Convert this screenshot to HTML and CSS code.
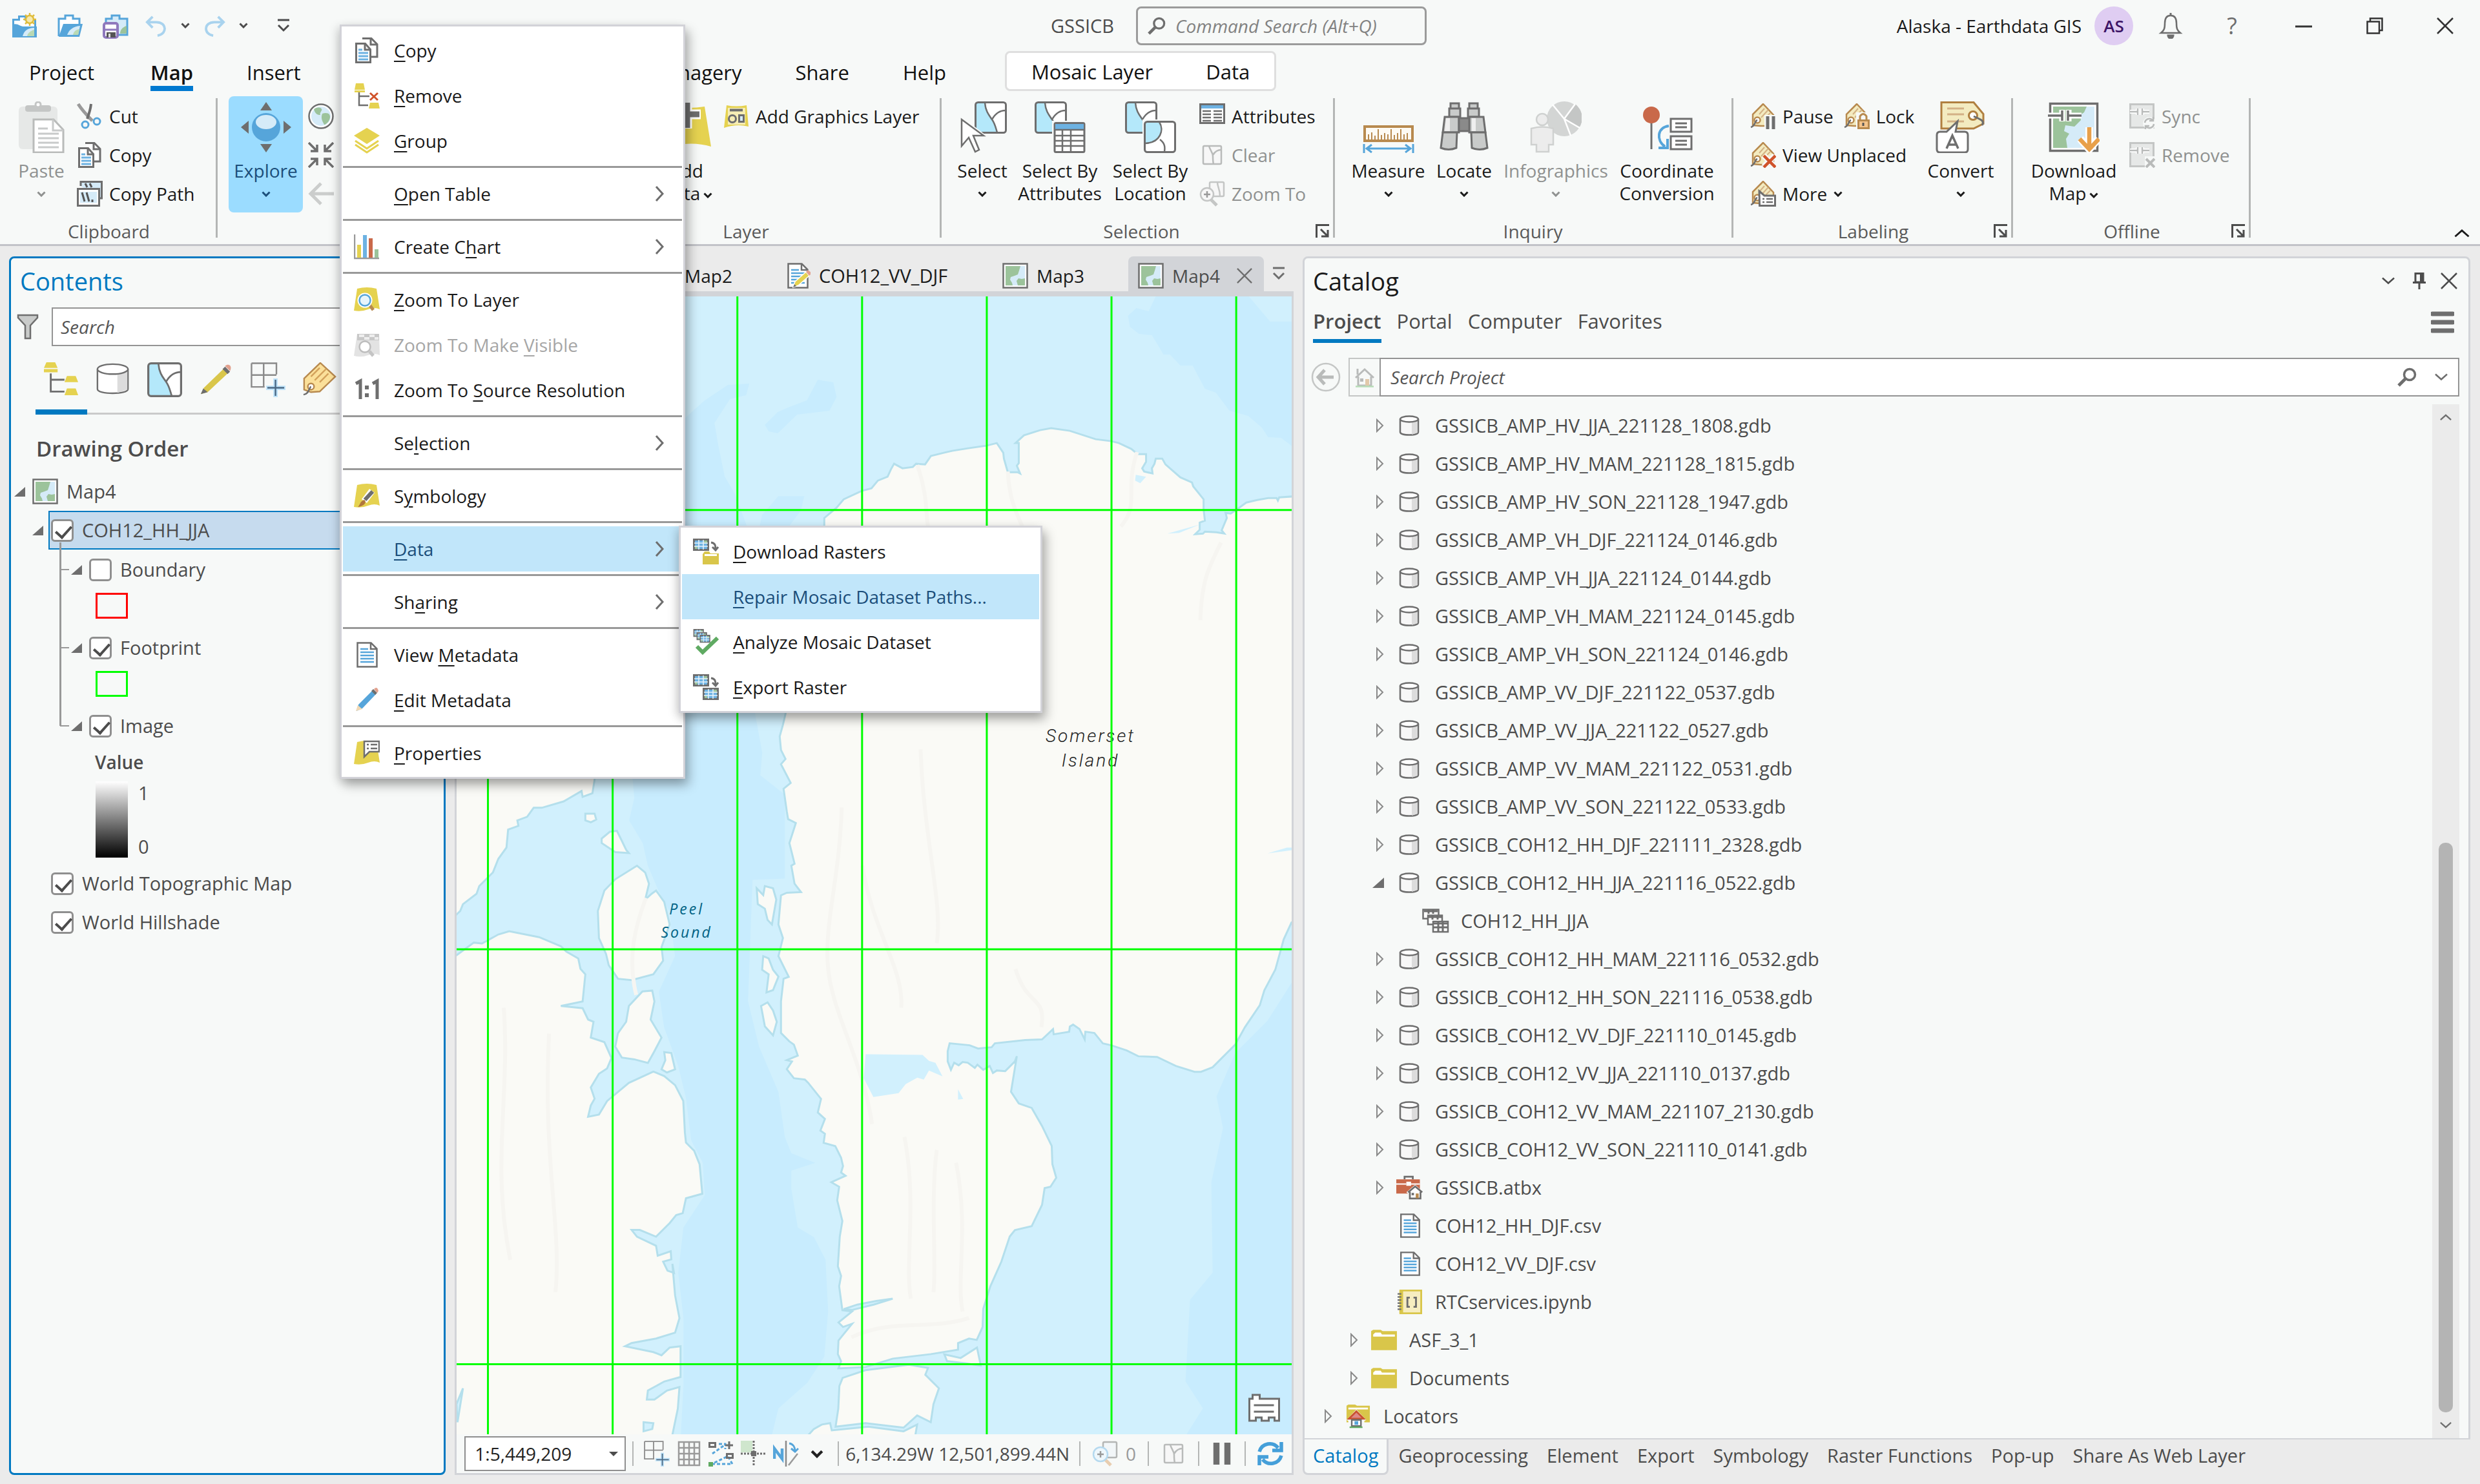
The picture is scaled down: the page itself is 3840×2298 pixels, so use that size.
FILE: index.html
```html
<!DOCTYPE html>
<html lang="en">
<head>
<meta charset="utf-8">
<meta name="viewport" content="width=device-width, initial-scale=1">
<title>GSSICB</title>
<link rel="stylesheet" href="styles.css">
</head>
<body>
<svg class="defs" aria-hidden="true">
  <symbol id="i-chev" viewBox="0 0 14 9"><path d="M1.500 1.500L7 7l5.500-5.500" fill="none" stroke="currentColor" stroke-width="3"/></symbol>
  <symbol id="i-chevthin" viewBox="0 0 20 12"><path d="M1 1.500l9 8 9-8" fill="none" stroke="currentColor" stroke-width="2.500"/></symbol>
  <symbol id="i-right" viewBox="0 0 14 26"><path d="M2 2l10 11L2 24" fill="none" stroke="#6e6e6e" stroke-width="3"/></symbol>
  <symbol id="i-launch" viewBox="0 0 21 21"><path d="M1.500 21V1.500H21M8 8l10 10M19 9v10H9" fill="none" stroke="#4c4c4c" stroke-width="3"/></symbol>
  <symbol id="i-mag" viewBox="0 0 30 30"><circle cx="19" cy="11" r="8.500" fill="none" stroke="#6e6e6e" stroke-width="3.500"/><path d="M13 17L2 28" stroke="#6e6e6e" stroke-width="5"/></symbol>
  <symbol id="i-new" viewBox="0 0 40 40"><path d="M1.500 36.500v-26h9v-5h10v5h15v26z" fill="#fff" stroke="#56a5da" stroke-width="3"/><path d="M0 38V18c8-3 12 3 18 3h20v17z" fill="#56a5da"/><path d="M16 36c2-8 8-13 18-13v13z" fill="#d5ebf8"/><path d="M23 36c1-5 5-8 11-10v10z" fill="#b9d9b4"/><circle cx="27" cy="10" r="6" fill="#f6e9ae" stroke="#e0bd3c" stroke-width="2.500"/><path d="M27 0v4M27 16v4M17 10h4M33 10h4M20 3l3 3M31 14l3 3M34 3l-3 3M23 14l-3 3" stroke="#e0bd3c" stroke-width="2.500"/></symbol>
  <symbol id="i-open" viewBox="0 0 40 40"><path d="M2 36V9h10V4h12v5h10v9" fill="#fff" stroke="#56a5da" stroke-width="3"/><path d="M2 37L9 17h30l-5 20z" fill="#56a5da"/><path d="M15 34c3-8 9-13 20-14l-3 14z" fill="#d5ebf8"/><path d="M24 34c1-5 4-8 10-9l-2 9z" fill="#b9d9b4"/></symbol>
  <symbol id="i-save" viewBox="0 0 40 40"><path d="M5 34V9h9V4h12v5h12v25z" fill="#d5ebf8" stroke="#56a5da" stroke-width="3"/><path d="M27 32c0-6 4-10 10-12v12z" fill="#9cc39b"/><rect x="2" y="16" width="21" height="22" rx="3" fill="#fff" stroke="#8f79bd" stroke-width="4"/><path d="M3 26h19" stroke="#8f79bd" stroke-width="3"/><path d="M6 30h14v8H6z" fill="#555"/><path d="M9 32h3v6H9z" fill="#ddd"/></symbol>
  <symbol id="i-undo" viewBox="0 0 36 36"><path d="M12 3L3 12l9 9M4 12h14c18 0 18 20 2 22" fill="none" stroke="#a9d3ee" stroke-width="4"/></symbol>
  <symbol id="i-redo" viewBox="0 0 36 36"><path d="M24 3l9 9-9 9M32 12H18C0 12 0 32 16 34" fill="none" stroke="#a9d3ee" stroke-width="4"/></symbol>
  <symbol id="i-over" viewBox="0 0 20 22"><path d="M1 2h18M2 10l8 8 8-8" fill="none" stroke="currentColor" stroke-width="3"/></symbol>
  <symbol id="i-bell" viewBox="0 0 34 40"><path d="M17 4c-8 0-9 7-9 12 0 8-1 11-6 15h30c-5-4-6-7-6-15 0-5-1-12-9-12z" fill="none" stroke="#6e6e6e" stroke-width="2.500"/><path d="M17 0v4M13 35a4 4 0 0 0 8 0z" stroke="#6e6e6e" stroke-width="3" fill="#6e6e6e"/></symbol>
  <symbol id="i-min" viewBox="0 0 26 26"><path d="M0 14h26" stroke="#333" stroke-width="3"/></symbol>
  <symbol id="i-rest" viewBox="0 0 26 26"><path d="M6 6V1.500h18.500V20H20" fill="none" stroke="#333" stroke-width="2.500"/><path d="M1.500 6.500H20v18H1.500z" fill="none" stroke="#333" stroke-width="2.500"/></symbol>
  <symbol id="i-x" viewBox="0 0 26 26"><path d="M1 1l24 24M25 1L1 25" stroke="currentColor" stroke-width="2.500"/></symbol>
  <symbol id="i-clip" viewBox="0 0 80 80"><rect x="5" y="8" width="60" height="66" rx="6" fill="#e6e8e7"/><rect x="15" y="6" width="40" height="10" rx="4" fill="#c4c6c5"/><circle cx="35" cy="5" r="4" fill="#fff" stroke="#c4c6c5" stroke-width="3"/><path d="M28 28h31l15 16v35H28z" fill="#fff" stroke="#b9bbba" stroke-width="3"/><path d="M58 28v17h16M35 42h15M35 50h32M35 57h32M35 64h32M35 71h32" fill="none" stroke="#c8caca" stroke-width="3"/></symbol>
  <symbol id="i-cut" viewBox="0 0 40 40"><path d="M2 1c5 8 12 16 22 26" stroke="#9a9a9a" stroke-width="5" fill="none"/><path d="M22 1c-1 9-3 15-6 23" stroke="#6e6e6e" stroke-width="4" fill="none"/><circle cx="13" cy="33" r="5" fill="none" stroke="#56a5da" stroke-width="3"/><circle cx="31" cy="28" r="5" fill="none" stroke="#56a5da" stroke-width="3"/></symbol>
  <symbol id="i-copy" viewBox="0 0 40 40"><path d="M13 1.500h14l9 9V30H24" fill="#fff" stroke="#6e6e6e" stroke-width="3"/><path d="M3.500 9.500h14l8 9v20h-22z" fill="#fff" stroke="#6e6e6e" stroke-width="3"/><path d="M17 9v10h9M26 2v9h9" fill="none" stroke="#6e6e6e" stroke-width="3"/><path d="M7 19h6M7 24h15M7 29h15M7 34h15" stroke="#6db2e2" stroke-width="3"/></symbol>
  <symbol id="i-path" viewBox="0 0 40 40"><path d="M6 8V1.500h32.500V27H35" fill="#d5ebf8" stroke="#6e6e6e" stroke-width="3"/><path d="M1.500 12.500h33v26h-33z" fill="#fff" stroke="#6e6e6e" stroke-width="3"/><path d="M5 17h26v17H5z" fill="#d5ebf8"/><path d="M8 18l4 14M15 18l4 14M24 29v4M13 4l3 6M20 4l3 6" stroke="#555" stroke-width="3"/></symbol>
  <symbol id="i-explore" viewBox="0 0 80 80"><path d="M40 1l9 13H31zM40 79l9-13H31zM1 40l12-10v20zM79 40L67 30v20z" fill="#6e6e6e"/><circle cx="40" cy="40" r="22" fill="#56a5da"/><ellipse cx="40" cy="32" rx="16" ry="11" fill="#d5ebf8"/></symbol>
  <symbol id="i-globe" viewBox="0 0 40 40"><circle cx="20" cy="20" r="18.500" fill="#fff" stroke="#6e6e6e" stroke-width="2.500"/><circle cx="20" cy="20" r="15" fill="#d5ebf8"/><path d="M9 9c6-5 14-2 12 2s-3 4-2 7c-4 0-8-1-10-9zM22 16c6-2 12-1 12 5s-6 12-9 12c-2-4-6-9-3-17z" fill="#9cc39b"/></symbol>
  <symbol id="i-zin" viewBox="0 0 40 40"><path d="M1 1l12 12M4 14h10V4M39 1L27 13M36 14H26V4M1 39l12-12M4 26h10v10M39 39L27 27M36 26H26v10" fill="none" stroke="#6e6e6e" stroke-width="3.500"/></symbol>
  <symbol id="i-back" viewBox="0 0 40 40"><path d="M20 4L4 20l16 16M4 20h36" fill="none" stroke="#cbcdcc" stroke-width="5"/></symbol>
  <symbol id="i-adddata" viewBox="0 0 80 80"><path d="M14 8q30 4 54 0l10 62q-32-10-74 2z" fill="#e5d250"/><path d="M41 2v40M22 20h40" stroke="#fff" stroke-width="15"/><path d="M41 2v39M22 20h38" stroke="#6e6e6e" stroke-width="9"/></symbol>
  <symbol id="i-addg" viewBox="0 0 40 40"><path d="M5 3q15 3 31 0l3 33q-18-5-38 2z" fill="#e5d250"/><path d="M7 7h27v26H7z" fill="#f6edb4"/><path d="M10 10.500h20" stroke="#6e6e6e" stroke-width="4"/><circle cx="14" cy="24" r="5.500" fill="none" stroke="#6e6e6e" stroke-width="3"/><path d="M24.500 18.500h7v10h-7z" fill="#d5ebf8" stroke="#6e6e6e" stroke-width="3"/></symbol>
  <symbol id="g-poly" viewBox="0 0 50 50"><rect x="1.500" y="1.500" width="47" height="47" rx="4" fill="#fff"/><path d="M2 2h14c1 14 8 20 12 25 4 8 5 14 7 21H2z" fill="#b4e8fa"/><path d="M16 2c1 14 7 20 11 26 5 7 6 14 8 20M27 28c5-9 12-14 21-14" fill="none" stroke="#6e6e6e" stroke-width="2.500"/><rect x="1.500" y="1.500" width="47" height="47" rx="4" fill="none" stroke="#6e6e6e" stroke-width="3"/></symbol>
  <symbol id="i-select" viewBox="0 0 80 80"><use href="#g-poly" x="28" y="0" width="50" height="50"/><path d="M8 28l34 26H24l12 20-6 4-10-23L8 71z" fill="#fff" stroke="#f7f9f8" stroke-width="7"/><path d="M8 28l34 25H26l9 22-6 3-10-22L8 69z" fill="#fff" stroke="#6e6e6e" stroke-width="2.500"/></symbol>
  <symbol id="i-selattr" viewBox="0 0 80 80"><use href="#g-poly" x="1" y="0" width="50" height="50"/><path d="M28 30h52v50H28z" fill="#f7f9f8"/><rect x="32" y="33.500" width="46" height="45" rx="2" fill="#fff" stroke="#6e6e6e" stroke-width="3"/><path d="M33 35h44v8H33z" fill="#6db2e2"/><path d="M32 44h46M32 53h46M32 61h46M32 69h46M44 44v34M57 44v34" stroke="#6e6e6e" stroke-width="2.500"/></symbol>
  <symbol id="i-selloc" viewBox="0 0 80 80"><use href="#g-poly" x="1" y="0" width="50" height="50"/><path d="M28 28h52v52H28z" fill="#f7f9f8"/><rect x="31.500" y="31.500" width="47" height="47" rx="4" fill="#fff"/><path d="M32 32h22c8 12 2 32-22 33z" fill="#b4e8fa"/><path d="M54 32c8 12 2 32-22 33M55 59c8 6 8 12 7 19" fill="none" stroke="#6e6e6e" stroke-width="2.500"/><rect x="31.500" y="31.500" width="47" height="47" rx="4" fill="none" stroke="#6e6e6e" stroke-width="3"/></symbol>
  <symbol id="i-attr" viewBox="0 0 40 40"><path d="M1.500 1.500h37v29h-37z" fill="#fff" stroke="#6e6e6e" stroke-width="3"/><path d="M3 3h34v5H3z" fill="#6db2e2"/><path d="M5 12h13M5 17h13M5 22h13M5 27h13M22 12h13M22 17h13M22 22h13M22 27h13" stroke="#6e6e6e" stroke-width="2.500"/></symbol>
  <symbol id="i-clear" viewBox="0 0 40 40"><g fill="#f7f7f7" stroke="#b9bbba" stroke-width="2.500"><rect x="6" y="6" width="28" height="28" rx="2"/><path d="M15 6c2 8 6 10 6 16s0 8 1 12M21 20c3-5 8-8 13-8" fill="none"/></g></symbol>
  <symbol id="i-zoomto" viewBox="0 0 40 40"><g fill="#f7f7f7" stroke="#c4c6c5" stroke-width="2.500"><rect x="16" y="2" width="22" height="22" rx="2"/><path d="M28 2c0 8 4 10 4 22" fill="none"/><circle cx="12" cy="21" r="10"/><path d="M7 21h10M12 16v10" fill="none" stroke="#9a9a9a"/><path d="M18 29l9 9" stroke-width="5"/></g></symbol>
  <symbol id="i-measure" viewBox="0 0 80 80"><path d="M3 39h74v22H3z" fill="#fdfaf3" stroke="#b88a4f" stroke-width="4"/><path d="M9 59v-8M14 59v-11M19 59v-6M24 59V43M29 59v-7M34 59v-10M39 59v-8M44 59V43M49 59v-7M54 59v-10M59 59V43M64 59v-8M69 59v-10" stroke="#b88a4f" stroke-width="2"/><path d="M2 66v14M78 66v14" stroke="#56a5da" stroke-width="3"/><path d="M5 73h70M14 67l-8 6 8 6M66 67l8 6-8 6" fill="none" stroke="#56a5da" stroke-width="3"/></symbol>
  <symbol id="i-locate" viewBox="0 0 80 80"><g stroke="#6e6e6e" stroke-width="3" fill="#c9cbca"><path d="M19 3h13v8H19zM48 3h13v8H48zM17 11h17v13H17zM46 11h17v13H46z"/><path d="M10 24h22v24H7zM48 24h22l3 24H48z"/><path d="M7 48h22l-1 24q-12 5-24 0zM51 48h22l3 24q-12 5-24 0z"/><path d="M32 26h16v20H32z" fill="#8a8a8a"/></g><path d="M12 26h6v20h-8zM52 26h6v20h-6z" fill="#efefef"/></symbol>
  <symbol id="i-info" viewBox="0 0 80 80"><circle cx="53" cy="27" r="27" fill="#d3d5d4"/><path d="M53 27L70 4a27 27 0 0 1 6 37z" fill="#c4c6c5"/><path d="M53 27L35 5M53 27L70 4M53 27l24 14M53 27l10 26" stroke="#fff" stroke-width="2.500"/><g fill="#ececec" stroke="#cfd1d0" stroke-width="2.500"><circle cx="19" cy="28" r="9"/><path d="M2 42q17-5 34 0v25h-7v11H10V67H2z"/></g></symbol>
  <symbol id="i-coord" viewBox="0 0 80 80"><path d="M16 30v44" stroke="#6e6e6e" stroke-width="3"/><circle cx="16" cy="21" r="13" fill="#c9694a"/><path d="M43 38c-18 2-20 22-6 32M27 72h14V58" fill="none" stroke="#56a5da" stroke-width="4"/><g fill="#fff" stroke="#6e6e6e" stroke-width="3"><path d="M46 27h32v20H46zM46 54h32v20H46z"/><path d="M53 34h18M53 40h18M53 61h18M53 67h18"/></g></symbol>
  <symbol id="g-tag" viewBox="0 0 40 40"><path d="M20 1L4 17v17l12 1h20V18z" fill="#f3ebc0" stroke="#b88a4f" stroke-width="2.500"/><path d="M14 17l8-9M17 22l11-12M24 22l7-7" stroke="#d3b185" stroke-width="2"/><circle cx="11" cy="26" r="4.500" fill="#fff" stroke="#b88a4f" stroke-width="2.500"/><path d="M11 26c-4 1-3 9-10 11" fill="none" stroke="#6e6e6e" stroke-width="2.500"/></symbol>
  <symbol id="i-pause" viewBox="0 0 40 40"><use href="#g-tag" width="40" height="40"/><path d="M22 18h18v22H22z" fill="#f7f9f8"/><path d="M27 20v20M36 20v20" stroke="#6e6e6e" stroke-width="5"/></symbol>
  <symbol id="i-lock" viewBox="0 0 40 40"><use href="#g-tag" width="40" height="40"/><path d="M19 14h21v26H19z" fill="#f7f9f8"/><path d="M25 26v-6q5-7 10 0v6" fill="none" stroke="#b88a4f" stroke-width="3"/><path d="M22.500 26.500h16v12h-16z" fill="#f5c48b" stroke="#b88a4f" stroke-width="3"/><path d="M30 30v5" stroke="#555" stroke-width="3"/></symbol>
  <symbol id="i-unpl" viewBox="0 0 40 40"><use href="#g-tag" width="40" height="40"/><path d="M21 21l17 17M38 21L21 38" stroke="#f7f9f8" stroke-width="9"/><path d="M21 21l18 18M39 21L21 39" stroke="#d0532b" stroke-width="4.500"/></symbol>
  <symbol id="i-more" viewBox="0 0 40 40"><use href="#g-tag" width="40" height="40"/><path d="M14 16l8 7h16.500v15.500H14.500z" fill="#fff" stroke="#6e6e6e" stroke-width="3"/><path d="M19 28h3M19 33h3M25 28h10M25 33h10" stroke="#6e6e6e" stroke-width="2.500"/></symbol>
  <symbol id="i-convert" viewBox="0 0 80 80"><path d="M10 1.500h50l15 18v15L60 42H10z" fill="#f3ebc0" stroke="#b07f3f" stroke-width="3"/><path d="M19 11h26M19 20h26M19 31h26" stroke="#d3b185" stroke-width="3"/><circle cx="59" cy="22" r="6.500" fill="#fff" stroke="#b07f3f" stroke-width="3"/><path d="M60 23c8 4 18 6 13 14" fill="none" stroke="#6e6e6e" stroke-width="3"/><path d="M8 47h10l17-16-3 16h14q5 0 5 5v22q0 5-5 5H8q-5 0-5-5V52q0-5 5-5z" fill="#fff" stroke="#6e6e6e" stroke-width="3"/><path d="M18 73l9-20 9 20M21 67h12" fill="none" stroke="#6e6e6e" stroke-width="3.500"/></symbol>
  <symbol id="i-dlmap" viewBox="0 0 80 80"><path d="M3.500 3.500h73v73h-73z" fill="#fff" stroke="#6e6e6e" stroke-width="3.500"/><path d="M8 8h64v64H8z" fill="#9cc39b"/><path d="M60 8h12v64H30l-2-14 5-8-8-4 2-9 14 2 10-10-1-8 6-4z" fill="#d5ebf8"/><path d="M0 22h22M32 22h20M22 13v18M32 13v18" stroke="#fff" stroke-width="9"/><path d="M0 22h22M32 22h20M22 14v16M31 14v16" stroke="#6e6e6e" stroke-width="3.500"/><path d="M64 40v34M50 58l14 16 14-16" fill="none" stroke="#fff" stroke-width="12"/><path d="M64 40v34M49 58l15 16 15-16" fill="none" stroke="#e8a04a" stroke-width="6.500"/></symbol>
  <symbol id="g-offm" viewBox="0 0 40 40"><path d="M1.500 1.500h36v36h-36z" fill="#e6e8e7" stroke="#c4c6c5" stroke-width="3"/><path d="M1 13h12M20 13h11M13 8v10M20 8v10" stroke="#fff" stroke-width="6"/><path d="M1 13h12M20 13h11M13 8v10M20 8v10" stroke="#b9bbba" stroke-width="2.500"/></symbol>
  <symbol id="i-sync" viewBox="0 0 40 40"><use href="#g-offm" width="40" height="40"/><circle cx="31" cy="31" r="10" fill="#f7f9f8"/><path d="M24 30a7 7 0 0 1 12-4M38 32a7 7 0 0 1-12 4M37 21v6h-6M25 41v-6h6" fill="none" stroke="#b9bbba" stroke-width="2.500"/></symbol>
  <symbol id="i-offrem" viewBox="0 0 40 40"><use href="#g-offm" width="40" height="40"/><path d="M24 22h16v18H24z" fill="#f7f9f8"/><path d="M26 26l13 13M39 26L26 39" stroke="#b9bbba" stroke-width="4"/></symbol>
  <symbol id="i-map" viewBox="0 0 40 40"><path d="M1.500 1.500h37v37h-37z" fill="#fff" stroke="#6e6e6e" stroke-width="2.500"/><path d="M5 5h30v30H5z" fill="#9cc39b"/><path d="M28 5h7v19l-5 1-5-1-3 4 2 7h-8l-1-4-3-5 1-4 6-2 5-2 2-6z" fill="#d5ebf8"/></symbol>
  <symbol id="i-remove" viewBox="0 0 40 40"><path d="M3 1h12l2 10H1zM1 12h16v3H1zM25 31h13l2 9H23z" fill="#e5d250"/><path d="M8 15v20h14M8 21h16" fill="none" stroke="#6e6e6e" stroke-width="2.500"/><path d="M25 16l12 11M37 16L25 27" stroke="#d0532b" stroke-width="3"/></symbol>
  <symbol id="i-group" viewBox="0 0 40 40"><path d="M20 0l20 12-20 13L0 12z" fill="#e5d250"/><path d="M2 20l18 12 18-12M2 26l18 12 18-12" fill="none" stroke="#e5d250" stroke-width="3"/></symbol>
  <symbol id="i-chart" viewBox="0 0 40 40"><path d="M1 1v37h38" fill="none" stroke="#9a9a9a" stroke-width="2.500"/><path d="M5 17h6v20H5z" fill="#e5d250"/><path d="M14 2h6v35h-6z" fill="#6db2e2"/><path d="M23 7h6v30h-6z" fill="#c9694a"/><path d="M32 24h6v13h-6z" fill="#9cc39b"/></symbol>
  <symbol id="g-lyr" viewBox="0 0 40 40"><path d="M5 3q15-4 30 0l5 32q-8-4-18 0T0 37z" fill="#e5d250"/></symbol>
  <symbol id="i-zlyr" viewBox="0 0 40 40"><use href="#g-lyr" width="40" height="40"/><path d="M24 28l6 8" stroke="#b88a4f" stroke-width="5"/><circle cx="17" cy="21" r="9" fill="#fff" stroke="#fff" stroke-width="5"/><circle cx="17" cy="21" r="8.500" fill="#e8f4fb" stroke="#56a5da" stroke-width="2.500"/></symbol>
  <symbol id="i-zvis" viewBox="0 0 40 40"><path d="M5 3h34l1 33q-8-4-18 0T0 37z" fill="#e3e3e3"/><path d="M5 3h34v10H5z" fill="#c8c8c8"/><path d="M8 4h8v4H8zM24 4h8v4h-8zM16 8h8v4h-8zM32 8h6v4h-6z" fill="#eee"/><path d="M24 30l6 7" stroke="#c4c4c4" stroke-width="5"/><circle cx="17" cy="23" r="8.500" fill="#fff" stroke="#bdbdbd" stroke-width="2.500"/></symbol>
  <symbol id="i-11" viewBox="0 0 40 40"><path d="M3 10l7-4v28M29 10l7-4v28" fill="none" stroke="#6e6e6e" stroke-width="5"/><path d="M17 13h6v6h-6zM17 25h6v6h-6z" fill="#6e6e6e"/></symbol>
  <symbol id="i-sym" viewBox="0 0 40 40"><use href="#g-lyr" width="40" height="40"/><path d="M28 12L16 28" stroke="#fff" stroke-width="10"/><path d="M29 13L17 26" stroke="#6e6e6e" stroke-width="6"/><path d="M16 26c5 4-1 10-10 11 4-3 3-9 10-11z" fill="#b0763c"/></symbol>
  <symbol id="i-doc" viewBox="0 0 40 40"><path d="M5.500 1.500h21l9 9v28h-30z" fill="#fff" stroke="#6e6e6e" stroke-width="2.500"/><path d="M26 2v9h9" fill="none" stroke="#6e6e6e" stroke-width="2.500"/><path d="M10 11h12M10 16h21M10 21h21M10 26h21M10 31h21" stroke="#56a5da" stroke-width="2.500"/></symbol>
  <symbol id="i-pen" viewBox="0 0 40 40"><path d="M4 37l3-10L28 6l6 5-21 22z" fill="#56a5da"/><path d="M3 37l3-9 7 6z" fill="#f1d9b5"/><path d="M27 6l6 6 3-3-6-6z" fill="#6e6e6e"/><path d="M31 3q5-5 7 3l-2 3z" fill="#e2a18e"/></symbol>
  <symbol id="i-prop" viewBox="0 0 40 40"><use href="#g-lyr" width="40" height="40"/><path d="M16 2h23v16H24l-8 8z" fill="#fff" stroke="#6e6e6e" stroke-width="2.500"/><path d="M20 7h3M20 13h3M26 7h10M26 13h10" stroke="#6e6e6e" stroke-width="2.500"/></symbol>
  <symbol id="g-ras" viewBox="0 0 26 20"><path d="M1.500 1.500h22v16h-22z" fill="#6db2e2" stroke="#6e6e6e" stroke-width="3"/><path d="M17 3h5v5h-5zM3 12h4v4H3z" fill="#9cc39b"/><path d="M9 2v15M16 2v15M2 7h21M2 12h21" stroke="#e8f4fb" stroke-width="1.500"/></symbol>
  <symbol id="i-dlras" viewBox="0 0 40 40"><use href="#g-ras" width="26" height="20"/><path d="M28 6c6 1 7 4 7 10M30 13l5 5 4-5" fill="none" stroke="#6e6e6e" stroke-width="3"/><path d="M15 40V24l3-4h7l2 3h13v17z" fill="#d9c64a"/><path d="M18 24h19v3H18z" fill="#fff"/></symbol>
  <symbol id="i-expras" viewBox="0 0 40 40"><use href="#g-ras" width="26" height="20"/><path d="M28 6c6 1 7 4 7 10M30 13l5 5 4-5" fill="none" stroke="#6e6e6e" stroke-width="3"/><use href="#g-ras" x="15" y="21" width="26" height="20"/></symbol>
  <symbol id="i-anras" viewBox="0 0 40 40"><use href="#g-ras" width="18" height="13"/><use href="#g-ras" x="5" y="5" width="18" height="13"/><use href="#g-ras" x="10" y="9" width="18" height="13"/><path d="M6 27l9 9L38 14" fill="none" stroke="#5faa62" stroke-width="6"/></symbol>
  <symbol id="i-filter" viewBox="0 0 34 40"><path d="M2 2h30v4L21 18v20h-8V18L2 6z" fill="#c9cbca" stroke="#6e6e6e" stroke-width="2.500"/></symbol>
  <symbol id="i-list" viewBox="0 0 56 56"><path d="M4 0h14l4 9H0zM0 11h22v5H0zM37 22h14l4 10H33zM37 42h14l4 11H33z" fill="#e5d250"/><path d="M11 18v29h22M11 28h22" fill="none" stroke="#6e6e6e" stroke-width="3"/></symbol>
  <symbol id="i-cyl" viewBox="0 0 56 56"><path d="M3 11v32c0 9 49 9 49 0V11" fill="#fff" stroke="#6e6e6e" stroke-width="2.500"/><path d="M35 18l16-4v30l-16 5z" fill="#dcdcdc"/><ellipse cx="27.500" cy="11" rx="24.500" ry="8" fill="#fff" stroke="#6e6e6e" stroke-width="2.500"/></symbol>
  <symbol id="i-pencil" viewBox="0 0 56 56"><path d="M3 51l5-10L40 10l7 7-33 31z" fill="#d9c64a"/><path d="M3 51l4-9 7 6z" fill="#6e6e6e"/><path d="M38 11l8 8 4-4-8-8z" fill="#6e6e6e"/><path d="M42 6c6-5 12 0 8 8z" fill="#e2a18e"/></symbol>
  <symbol id="i-snap" viewBox="0 0 56 56"><path d="M1.500 1.500h40v18M1.500 1.500v38h21M1.500 20.500h40M21 1.500v38" fill="none" stroke="#8a8a8a" stroke-width="2.500"/><path d="M40 26v30M25 41h31" stroke="#bfe3f9" stroke-width="7"/><path d="M40 28v26M27 41h27" stroke="#4c6a85" stroke-width="2.500"/></symbol>
  <symbol id="i-tag" viewBox="0 0 56 56"><path d="M29 1L3 26v18l11 4 14-1 25-24z" fill="#fbe09a" stroke="#b88a4f" stroke-width="2.500"/><path d="M14 23l14-14M20 29l18-18M28 32l14-14" stroke="#d3a25c" stroke-width="2.500"/><circle cx="14" cy="39" r="5" fill="#fff" stroke="#b88a4f" stroke-width="2.500"/><path d="M14 39c-3 2-3 12-12 13" fill="none" stroke="#6e6e6e" stroke-width="2.500"/></symbol>
  <symbol id="i-open3" viewBox="0 0 18 18"><path d="M18 1v16H0z" fill="#6e6e6e"/></symbol>
  <symbol id="i-closed" viewBox="0 0 18 22"><path d="M7 2l9 9-9 9z" fill="none" stroke="#8a8a8a" stroke-width="2"/></symbol>
  <symbol id="i-gdb" viewBox="0 0 32 32"><path d="M2 6v20c0 6 28 6 28 0V6" fill="#f7f7f7" stroke="#6e6e6e" stroke-width="2.500"/><path d="M20 11l9-2v18l-9 3z" fill="#dcdcdc"/><ellipse cx="16" cy="6" rx="14" ry="4.500" fill="#fff" stroke="#6e6e6e" stroke-width="2.500"/></symbol>
  <symbol id="i-mos" viewBox="0 0 42 38"><g fill="#fff" stroke="#6e6e6e" stroke-width="2.500"><path d="M1.500 1.500h24v14h-24z"/><path d="M9 10.500h22v14H9z"/><path d="M17 20h23v16H17z"/></g><path d="M3 4h21M10 13h20M18 23h21M18 29h21M25 20v16M32 20v16M10 2v6M17 2v6M16 11v6M24 11v6" stroke="#6e6e6e" stroke-width="3"/></symbol>
  <symbol id="i-tbx" viewBox="0 0 46 40"><path d="M14 6V1.500h14V6" fill="none" stroke="#6e6e6e" stroke-width="3"/><path d="M0 6h40v24H0z" fill="#c9694a"/><path d="M0 14h17M24 14h16" stroke="#fff" stroke-width="2"/><path d="M17 10h8v7h-8z" fill="#fff"/><path d="M17 28l15-13 14 13-3 3v9H21v-9z" fill="#f7f9f8"/><path d="M20 28l12-10 12 10M23 27v11.500h18V27" fill="#fff" stroke="#6e6e6e" stroke-width="3"/><path d="M33 30h5v8h-5z" fill="#b88a4f"/><path d="M26 29h4v4h-4z" fill="#6e6e6e"/></symbol>
  <symbol id="i-nb" viewBox="0 0 40 40"><path d="M4.500 1.500h34v37h-34z" fill="#f6edc0" stroke="#d9c64a" stroke-width="3"/><path d="M3 2h6v36H3z" fill="#d9c64a"/><path d="M0 7h6M0 12h6M0 17h6M0 22h6M0 27h6M0 32h6" stroke="#6e6e6e" stroke-width="2.500"/><path d="M20 13h-4v15h4M26 13h4v15h-4" fill="none" stroke="#6e6e6e" stroke-width="3"/></symbol>
  <symbol id="i-fold" viewBox="0 0 40 32"><path d="M1 31V3l3-2h11l3 2h21v28z" fill="#d9c64a"/><path d="M4 8l3-3h8l2 3h19v3H4z" fill="#fff"/></symbol>
  <symbol id="i-loc" viewBox="0 0 40 40"><path d="M1 30V3l3-2h11l3 2h21v27z" fill="#d9c64a"/><path d="M4 6h32v3H4z" fill="#fff"/><path d="M1 26L17 9l16 17-3 2v10H4V28z" fill="#f7f9f8"/><path d="M5 24l12-12 12 12zM8 24h18" fill="#d88" stroke="#c9532f" stroke-width="3"/><path d="M9.500 26h15v10h-15z" fill="#fff" stroke="#6e6e6e" stroke-width="2.500"/><path d="M14 28h6v6h-6z" fill="#56a5da"/><path d="M6 38h21" stroke="#5faa62" stroke-width="2.500"/></symbol>
  <symbol id="i-circ" viewBox="0 0 46 46"><circle cx="23" cy="23" r="21" fill="none" stroke="#c4c6c5" stroke-width="2.500"/><path d="M21 12L11 23l10 11M12 23h23" fill="none" stroke="#b9bbba" stroke-width="5"/></symbol>
  <symbol id="i-home" viewBox="0 0 32 32"><path d="M2 17L16 4l14 13M6 15v14h20V15M5 3v9" fill="none" stroke="#b9bbba" stroke-width="3"/><path d="M17 19h6v10h-6z" fill="#e2c9aa"/><path d="M9 18h5v5H9z" fill="#b9bbba"/><path d="M2 30.500h28" stroke="#b7dcb7" stroke-width="2.500"/></symbol>
  <symbol id="i-pin" viewBox="0 0 20 26"><path d="M4 1.500h12V15H4zM0 15.500h20M10 16v10" fill="none" stroke="#4c4c4c" stroke-width="3"/><path d="M11 1h5v14h-5z" fill="#4c4c4c"/></symbol>
  <symbol id="i-ham" viewBox="0 0 36 34"><path d="M2 4h32M2 17h32M2 30h32" stroke="#6e6e6e" stroke-width="7" stroke-linecap="round"/></symbol>
  <symbol id="i-mdoc" viewBox="0 0 40 40"><use href="#i-doc" width="40" height="40"/><path d="M13 38l3-9 17-15 5 6-17 15z" fill="#e5d250" stroke="#fff" stroke-width="1.500"/><path d="M33 14l3-3 6 5-4 4z" fill="#e2a18e"/><path d="M13 38l2-5 3 3z" fill="#6e6e6e"/></symbol>
  <symbol id="i-grid" viewBox="0 0 36 40"><path d="M2 2h32v36H2zM2 11h32M2 20h32M2 29h32M10 2v36M18 2v36M26 2v36" fill="none" stroke="#9a9a9a" stroke-width="2.500"/></symbol>
  <symbol id="i-infer" viewBox="0 0 40 40"><path d="M6 20L26 6M16 5h10v8M5 36h32l-7-12z" fill="none" stroke="#56a5da" stroke-width="3" stroke-dasharray="5 3"/><path d="M1.500 3.500h9v6h-9zM28.500 20.500h9v6h-9z" fill="none" stroke="#6e6e6e" stroke-width="3"/><path d="M32 1v12M26 7h12" stroke="#6e6e6e" stroke-width="3"/><path d="M0 33h7v7H0z" fill="#5faa62"/></symbol>
  <symbol id="i-cross" viewBox="0 0 40 40"><path d="M0 0h18v18H0z" fill="#cfe6cd"/><path d="M20 0v40M0 20h40" stroke="#6e6e6e" stroke-width="3" stroke-dasharray="3 2"/><path d="M16 16h8v8h-8z" fill="#6e6e6e"/></symbol>
  <symbol id="i-north" viewBox="0 0 40 40"><path d="M2 28V12l12 16V12" fill="none" stroke="#56a5da" stroke-width="4.500"/><path d="M20 0v40" stroke="#8a8a8a" stroke-width="2.500"/><path d="M25 4c6 1 9 6 9 12M28 12l6 5 5-5" fill="none" stroke="#56a5da" stroke-width="3"/><path d="M24 38l14-18" stroke="#9a9a9a" stroke-width="2.500"/></symbol>
  <symbol id="i-zsel" viewBox="0 0 40 40"><rect x="17" y="2" width="21" height="24" rx="2" fill="#f2f6f8" stroke="#b4b6b5" stroke-width="2.500"/><path d="M20 29l9 9" stroke="#e8cdb0" stroke-width="5"/><circle cx="13" cy="21" r="11" fill="#eef7fc" stroke="#b5d9ef" stroke-width="2.500"/><path d="M8 21h10M13 16v10" stroke="#9a9a9a" stroke-width="2.500"/></symbol>
  <symbol id="i-bars" viewBox="0 0 30 36"><path d="M6 0v36M24 0v36" stroke="#6e6e6e" stroke-width="10"/></symbol>
  <symbol id="i-refresh" viewBox="0 0 40 40"><path d="M3 17C7 3 24 1 32 11M37 23C33 37 16 39 8 29M37 2v13H23M3 38V25h14" fill="none" stroke="#459fd9" stroke-width="5.500"/></symbol>
  <symbol id="i-pop" viewBox="0 0 52 46"><path d="M3 43V9h5V3h11v6h30v34h-7v-5h-9v5H22v-5h-9v5z" fill="#fff" stroke="#6e6e6e" stroke-width="3"/><path d="M10 19h31M10 29h31" stroke="#6e6e6e" stroke-width="3"/></symbol>
</svg>

<header class="head">
  <div class="titlebar">
    <div class="qat">
      <button aria-label="New project"><svg class="s40"><use href="#i-new"/></svg></button>
      <button aria-label="Open project"><svg class="s40"><use href="#i-open"/></svg></button>
      <button aria-label="Save project"><svg class="s40"><use href="#i-save"/></svg></button>
      <button class="split" aria-label="Undo"><svg class="s36"><use href="#i-undo"/></svg><svg class="chev"><use href="#i-chev"/></svg></button>
      <button class="split" aria-label="Redo"><svg class="s36"><use href="#i-redo"/></svg><svg class="chev"><use href="#i-chev"/></svg></button>
      <button aria-label="Customize toolbar"><svg class="over"><use href="#i-over"/></svg></button>
    </div>
    <div class="center">
      <span class="proj">GSSICB</span>
      <label class="cmd"><svg class="s28"><use href="#i-mag"/></svg><input type="search" aria-label="Command Search" placeholder="Command Search (Alt+Q)"></label>
    </div>
    <div class="account">
      <span>Alaska - Earthdata GIS</span>
      <button class="avatar" aria-label="Account">AS</button>
      <button class="bell" aria-label="Notifications"><svg class="s40"><use href="#i-bell"/></svg></button>
      <button class="help" aria-label="Help">?</button>
      <button class="win" aria-label="Minimize"><svg class="s26"><use href="#i-min"/></svg></button>
      <button class="win" aria-label="Restore"><svg class="s26"><use href="#i-rest"/></svg></button>
      <button class="win" aria-label="Close"><svg class="s26"><use href="#i-x"/></svg></button>
    </div>
  </div>

  <nav class="tabs">
    <a href="#project">Project</a>
    <a href="#map" class="on">Map</a>
    <a href="#insert">Insert</a>
    <a href="#imagery" class="imagery">Imagery</a>
    <a href="#share">Share</a>
    <a href="#help">Help</a>
    <div class="context"><a href="#mosaic">Mosaic Layer</a><a href="#data">Data</a></div>
  </nav>

  <div class="ribbon">
    <section class="grp clipboard">
      <div class="body">
        <button class="big off w-paste"><svg class="s80"><use href="#i-clip"/></svg><span>Paste</span><svg class="chev"><use href="#i-chev"/></svg></button>
        <div class="col">
          <button class="sm"><svg class="s40"><use href="#i-cut"/></svg>Cut</button>
          <button class="sm"><svg class="s40"><use href="#i-copy"/></svg>Copy</button>
          <button class="sm"><svg class="s40"><use href="#i-path"/></svg>Copy Path</button>
        </div>
      </div>
      <div class="lbl"><span>Clipboard</span></div>
    </section>
    <section class="grp navigate">
      <div class="body">
        <button class="big active w-explore"><svg class="s80"><use href="#i-explore"/></svg><span>Explore</span><svg class="chev"><use href="#i-chev"/></svg></button>
        <div class="col">
          <button class="sm" aria-label="Full Extent"><svg class="s40"><use href="#i-globe"/></svg></button>
          <button class="sm" aria-label="Fixed Zoom In"><svg class="s40"><use href="#i-zin"/></svg></button>
          <button class="sm" aria-label="Previous Extent"><svg class="s40"><use href="#i-back"/></svg></button>
        </div>
      </div>
      <div class="lbl"><span>Navigate</span></div>
    </section>
    <section class="grp layer">
      <div class="body">
        <button class="big w-add"><svg class="s80"><use href="#i-adddata"/></svg><span>Add</span><span>Data<svg class="chev"><use href="#i-chev"/></svg></span></button>
        <div class="col"><button class="sm"><svg class="s40"><use href="#i-addg"/></svg>Add Graphics Layer</button></div>
      </div>
      <div class="lbl"><span>Layer</span></div>
    </section>
    <section class="grp selection">
      <div class="body">
        <button class="big w-select"><svg class="s80"><use href="#i-select"/></svg><span>Select</span><svg class="chev"><use href="#i-chev"/></svg></button>
        <button class="big w-attr"><svg class="s80"><use href="#i-selattr"/></svg><span>Select By</span><span>Attributes</span></button>
        <button class="big w-loc"><svg class="s80"><use href="#i-selloc"/></svg><span>Select By</span><span>Location</span></button>
        <div class="col">
          <button class="sm"><svg class="s40"><use href="#i-attr"/></svg>Attributes</button>
          <button class="sm off"><svg class="s40"><use href="#i-clear"/></svg>Clear</button>
          <button class="sm off"><svg class="s40"><use href="#i-zoomto"/></svg>Zoom To</button>
        </div>
      </div>
      <div class="lbl"><span>Selection</span><button aria-label="Selection options"><svg class="launch"><use href="#i-launch"/></svg></button></div>
    </section>
    <section class="grp inquiry">
      <div class="body">
        <button class="big w-measure"><svg class="s80"><use href="#i-measure"/></svg><span>Measure</span><svg class="chev"><use href="#i-chev"/></svg></button>
        <button class="big w-select"><svg class="s80"><use href="#i-locate"/></svg><span>Locate</span><svg class="chev"><use href="#i-chev"/></svg></button>
        <button class="big off w-info"><svg class="s80"><use href="#i-info"/></svg><span>Infographics</span><svg class="chev"><use href="#i-chev"/></svg></button>
        <button class="big w-coord"><svg class="s80"><use href="#i-coord"/></svg><span>Coordinate</span><span>Conversion</span></button>
      </div>
      <div class="lbl"><span>Inquiry</span></div>
    </section>
    <section class="grp labeling">
      <div class="body">
        <div class="col lab">
          <div class="pair"><button class="sm"><svg class="s40"><use href="#i-pause"/></svg>Pause</button><button class="sm"><svg class="s40"><use href="#i-lock"/></svg>Lock</button></div>
          <button class="sm"><svg class="s40"><use href="#i-unpl"/></svg>View Unplaced</button>
          <button class="sm"><svg class="s40"><use href="#i-more"/></svg>More<svg class="chev"><use href="#i-chev"/></svg></button>
        </div>
        <button class="big w-convert"><svg class="s80"><use href="#i-convert"/></svg><span>Convert</span><svg class="chev"><use href="#i-chev"/></svg></button>
      </div>
      <div class="lbl"><span>Labeling</span><button aria-label="Labeling options"><svg class="launch"><use href="#i-launch"/></svg></button></div>
    </section>
    <section class="grp offline">
      <div class="body">
        <button class="big w-dl"><svg class="s80"><use href="#i-dlmap"/></svg><span>Download</span><span>Map<svg class="chev"><use href="#i-chev"/></svg></span></button>
        <div class="col">
          <button class="sm off"><svg class="s40"><use href="#i-sync"/></svg>Sync</button>
          <button class="sm off"><svg class="s40"><use href="#i-offrem"/></svg>Remove</button>
        </div>
      </div>
      <div class="lbl"><span>Offline</span><button aria-label="Offline options"><svg class="launch"><use href="#i-launch"/></svg></button></div>
    </section>
    <button class="collapse" aria-label="Collapse ribbon"><svg><use href="#i-chevthin"/></svg></button>
  </div>
</header>

<main class="work">
  <section class="contents">
    <h2>Contents</h2>
    <div class="find"><svg class="filter"><use href="#i-filter"/></svg><input type="search" aria-label="Search contents" placeholder="Search"></div>
    <div class="modes">
      <button class="on" aria-label="List by drawing order"><svg><use href="#i-list"/></svg></button>
      <button aria-label="List by data source"><svg><use href="#i-cyl"/></svg></button>
      <button aria-label="List by selection"><svg><use href="#g-poly"/></svg></button>
      <button aria-label="List by editing"><svg><use href="#i-pencil"/></svg></button>
      <button aria-label="List by snapping"><svg><use href="#i-snap"/></svg></button>
      <button aria-label="List by labeling"><svg><use href="#i-tag"/></svg></button>
    </div>
    <h3>Drawing Order</h3>
    <div class="toc">
      <div class="row"><svg class="tri"><use href="#i-open3"/></svg><svg class="s40"><use href="#i-map"/></svg><span>Map4</span></div>
      <div class="row l1"><svg class="tri"><use href="#i-open3"/></svg><label class="sel"><input type="checkbox" checked>COH12_HH_JJA</label></div>
      <div class="branch">
        <div class="row l2"><svg class="tri"><use href="#i-open3"/></svg><label><input type="checkbox">Boundary</label></div>
        <div class="sym"><i class="red"></i></div>
        <div class="row l2"><svg class="tri"><use href="#i-open3"/></svg><label><input type="checkbox" checked>Footprint</label></div>
        <div class="sym"><i class="green"></i></div>
        <div class="row l2"><svg class="tri"><use href="#i-open3"/></svg><label><input type="checkbox" checked>Image</label></div>
      </div>
      <div class="value">Value</div>
      <div class="ramp"><i></i><div><span>1</span><span>0</span></div></div>
      <div class="row base"><label><input type="checkbox" checked>World Topographic Map</label></div>
      <div class="row base"><label><input type="checkbox" checked>World Hillshade</label></div>
    </div>
  </section>

  <section class="view">
    <div class="vtabs">
      <a href="#map2" class="t1"><svg class="s40"><use href="#i-map"/></svg>Map2</a>
      <a href="#coh" class="t2"><svg class="s40"><use href="#i-mdoc"/></svg>COH12_VV_DJF</a>
      <a href="#map3" class="t1"><svg class="s40"><use href="#i-map"/></svg>Map3</a>
      <a href="#map4" class="t1 on"><svg class="s40"><use href="#i-map"/></svg>Map4<svg class="close"><use href="#i-x"/></svg></a>
      <button aria-label="All views"><svg class="over"><use href="#i-over"/></svg></button>
    </div>
    <div class="canvas">
      <svg class="chart" viewBox="707 459 1292 1762" preserveAspectRatio="xMinYMin slice" role="img" aria-label="Map of Somerset Island">
        <g class="deep">
          <path d="M1789 459L1778 482L1759 477L1746 489L1749 506L1763 517L1783 519L1801 549L1811 549L1827 566L1846 566L1865 602L1882 608L1903 636L1932 644L1953 662L1963 677L1983 678L2000 691V498H1966L1933 459z"/>
          <path d="M1060 648L1091 620L1127 596L1160 594L1155 612L1130 618L1106 655L1112 690L1122 738L1138 765L1156 814H1060z"/>
          <path d="M1184 658L1204 638L1220 631L1249 620L1266 588L1290 592L1295 615L1284 636L1234 642L1204 671L1190 668z"/>
          <path d="M1180 797L1205 768L1245 768L1240 790L1222 814H1176z"/>
          <path d="M970 1100H1168L1180 1165L1177 1200L1215 1230V1360L1165 1362L1158 1550L1175 1620L1205 1690L1215 1760L1225 1785L1262 1800L1225 1812L1225 1840L1235 1900L1260 1915L1278 1950L1282 2030L1276 2100L1250 2140L1205 2180L1195 2221H1054L1058 2145V2040L1050 1970L1058 1900L1091 1850L1088 1800L1070 1765L1062 1700L1050 1650L1028 1590L1020 1535L1045 1480L1036 1410L1020 1380L1003 1340L995 1305L974 1270L982 1235z"/>
          <path d="M2000 1520L1962 1580L1912 1630L1883 1697L1893 1746L1875 1830L1877 1970L1842 2012L1835 2138L1862 2180L1836 2221H2000z"/>
        </g>
        <g class="land">
          <path d="M1276 1000V802L1295 786L1306 773L1334 760L1349 756L1359 744L1374 738L1379 727L1384 718L1397 725L1413 723L1418 718L1432 719L1441 706L1461 701L1474 698L1499 694L1527 690L1543 686L1553 701L1554 710L1560 731H1575L1579 733L1574 721L1577 717V686L1572 686L1585 674L1610 666L1627 663L1656 667L1696 680L1720 683L1732 686L1751 695L1761 703H1774V715L1768 725L1771 730L1784 733L1783 725L1787 718L1789 710H1799L1804 719L1827 739L1845 747L1847 753L1863 773V788L1865 806L1857 809V820L1850 827L1862 826L1865 823L1883 824L1895 826L1891 821L1899 802L1897 794L1905 795L1914 789L1929 778L1946 774L1963 771L1976 771L1978 775L1980 770L2010 768V1420L1999 1428L1987 1454L1974 1501L1957 1533L1950 1556L1927 1590L1912 1617L1877 1652L1859 1659H1849L1820 1650L1791 1636L1762 1635L1744 1626L1720 1618L1707 1615L1694 1599L1680 1597L1679 1609L1671 1593L1661 1586L1656 1589L1655 1597L1631 1601L1630 1593L1613 1609L1587 1610L1540 1615L1535 1621L1514 1623L1501 1618L1470 1615L1467 1627V1643L1472 1656L1477 1645L1484 1649L1490 1644L1498 1645L1509 1653L1513 1648L1522 1656L1532 1650L1537 1661L1543 1657L1556 1658L1571 1643L1574 1635L1571 1653L1565 1690L1577 1708L1597 1715L1613 1743L1628 1774L1629 1802L1635 1823L1626 1837L1617 1839L1613 1865L1597 1898L1571 1904L1563 1914L1550 1953L1533 1991L1522 2026L1521 2054L1512 2074L1500 2072L1483 2079V2089L1441 2096L1382 2103L1340 2116L1298 2118L1302 2107L1297 2096L1298 2075L1306 2065L1319 2049L1305 2054L1298 2047L1319 2030L1304 2028L1299 1991L1302 1975L1297 1960L1300 1914L1304 1890L1296 1858L1299 1837L1287 1830L1309 1820L1302 1815L1305 1805L1302 1792L1293 1774L1275 1769L1277 1755L1270 1750L1277 1732L1266 1722L1271 1701L1251 1676L1246 1671L1229 1669L1218 1655L1226 1643L1218 1641L1235 1634L1229 1617L1222 1612L1209 1599V1550L1213 1515L1221 1512L1205 1480L1212 1452L1205 1431L1209 1386L1218 1382L1240 1381L1230 1368L1225 1340L1230 1337L1222 1305L1232 1274L1220 1268L1218 1256L1213 1221L1224 1212L1209 1183L1216 1175L1209 1161L1207 1140L1212 1122L1216 1105L1222 1000z"/>
        </g>
        <path class="bay" d="M1340 1632L1428 1633L1438 1642L1448 1645L1459 1666L1438 1657L1430 1671L1420 1668L1402 1678L1391 1692L1352 1698L1337 1669zM1483 1686L1491 1701L1483 1702zM1758 735L1774 738L1765 748L1757 744zM1807 826L1857 812L1825 825zM1962 1321L1992 1312L2000 1312V1316L1985 1318z"/>
        <g class="land" transform="translate(700 1200) scale(.8418 .7003)">
          <path d="M-20-20H262V10L258 40L240 48L238 35L205 58L165 72L150 72L138 92L120 100L122 112L103 120L100 160L85 185L75 215L50 245L45 262L20 285L15 300L-20 340z"/>
          <path d="M0 405L40 370L55 372L85 352L105 345L160 358L200 378L210 390L232 405L236 428L245 440L240 500L200 510L240 515L250 540L260 545L255 580L280 590L293 625L285 648L270 660L255 690L262 715L255 730L250 755L270 750L285 720L325 680L370 655L390 665L410 685L425 720L428 790L430 812L445 830L455 860L460 925L430 935L424 968L412 972L400 990L375 1020L345 1005L330 1005L340 1020L375 1040L378 1062L402 1052L403 1070L388 1075L396 1095L408 1100L405 1080L410 1150L418 1200L410 1232L375 1245L330 1255L318 1262L370 1275L385 1282L400 1265L420 1262V1330L390 1340L360 1360L358 1380L372 1380L395 1360L418 1352L415 1400L405 1458V1490H-20V405z"/>
          <path d="M340 200L355 215L362 240L355 275L367 262L375 255L390 280L400 330L385 380L388 410L370 440L330 453L305 450L288 420L283 395L270 360L268 300L280 255L300 230z"/>
          <path d="M350 478L368 476L372 500L365 540L385 580L372 610L360 636L335 628L312 624L300 600L305 570L320 545L325 510z"/>
          <path d="M390 612L403 614L410 650L395 657L385 650L392 630z"/>
          <path d="M303 123L310 140L320 165L325 172L300 170L275 150L275 140L290 125zM245 85L262 85L265 98L255 104L245 100z"/>
          <path d="M560 250L572 265L575 245L590 250L596 275L588 330L580 320L575 295L562 285z"/>
          <path d="M572 400L582 405L590 430L600 445L590 475L578 480L582 440L570 430zM568 510L580 502L590 520L597 545L590 575L575 555z"/>
          <path d="M712 1350L718 1332L760 1315L840 1303L875 1310L870 1325L895 1355L885 1390L880 1430L855 1415L830 1442L760 1432L705 1440L710 1400z"/>
          <path d="M650 1465L665 1445L680 1435L695 1432L698 1448L765 1440L830 1450L855 1435L850 1470z"/>
          <path d="M905 1280L935 1288L965 1265L972 1305L945 1300L910 1295z"/>
        </g>
        <g class="inlet" transform="translate(700 1200) scale(.8418 .7003)">
          <path d="M720 1180L745 1170L780 1162L810 1157L775 1170L735 1182z"/>
          <path d="M352 1430L370 1432L368 1445L352 1450zM10 1430L20 1355L8 1390z"/>
        </g>
        <g class="relief">
          <path d="M1303 1250C1300 1360 1275 1430 1282 1500S1335 1640 1350 1740M1425 1160C1430 1300 1460 1400 1450 1460M1335 1340C1350 1440 1400 1500 1395 1560M1572 1500C1590 1560 1620 1540 1612 1590M1560 730C1563 800 1595 820 1590 850M1760 700C1740 760 1765 780 1735 815M1420 720C1440 780 1430 800 1440 830M1890 840C1870 880 1860 900 1858 960M1480 1800C1500 1900 1480 1980 1490 2030M1400 1760C1420 1860 1400 1960 1410 2010M1450 1780C1440 1860 1450 1960 1445 2000M780 1560C790 1700 760 1800 790 1950M850 1600C840 1800 870 1900 860 2000M1000 1390C985 1430 970 1480 985 1540M1318 2070C1380 2040 1440 2060 1500 2040"/>
        </g>
        <g class="names">
          <text class="isle" x="1688" y="1149">Somerset</text>
          <text class="isle" x="1688" y="1187">Island</text>
          <text class="sea" x="1063" y="1415">Peel</text>
          <text class="sea" x="1063" y="1451">Sound</text>
        </g>
        <path class="foot" d="M755.500 459V2230M948.500 459V2230M1141.500 459V2230M1334.500 459V2230M1527.500 459V2230M1720.500 459V2230M1913.500 459V2230M700 789.500H2010M700 1469.500H2010M700 2111.500H2010"/>
      </svg>
      <button class="popbtn" aria-label="Pop-up"><svg><use href="#i-pop"/></svg></button>
    </div>
    <div class="status">
      <label class="scale"><select aria-label="Map scale"><option>1:5,449,209</option></select><i></i></label>
      <span class="bar"></span>
      <svg class="s40"><use href="#i-snap"/></svg>
      <svg class="s40"><use href="#i-grid"/></svg>
      <svg class="s40"><use href="#i-infer"/></svg>
      <svg class="s40"><use href="#i-cross"/></svg>
      <svg class="s40"><use href="#i-north"/></svg>
      <button class="more" aria-label="More tools"><svg class="chev2"><use href="#i-chev"/></svg></button>
      <span class="bar"></span>
      <span class="coords">6,134.29W 12,501,899.44N</span>
      <div class="tail">
        <span class="bar"></span>
        <span class="count"><svg class="s40"><use href="#i-zsel"/></svg>0</span>
        <span class="bar"></span>
        <svg class="s40"><use href="#i-clear"/></svg>
        <span class="bar"></span>
        <button aria-label="Pause drawing"><svg class="s36"><use href="#i-bars"/></svg></button>
        <span class="bar"></span>
        <button aria-label="Refresh"><svg class="s40"><use href="#i-refresh"/></svg></button>
      </div>
    </div>
  </section>

  <section class="catalog">
    <div class="pane">
      <div class="ptitle"><h2>Catalog</h2>
        <button aria-label="Pane options"><svg class="c1"><use href="#i-chevthin"/></svg></button>
        <button aria-label="Auto hide"><svg class="c2"><use href="#i-pin"/></svg></button>
        <button aria-label="Close pane"><svg class="s26"><use href="#i-x"/></svg></button>
      </div>
      <div class="ptabs">
        <nav><a href="#p" class="on">Project</a><a href="#portal">Portal</a><a href="#computer">Computer</a><a href="#fav">Favorites</a></nav>
        <button aria-label="Menu"><svg class="ham"><use href="#i-ham"/></svg></button>
      </div>
      <div class="pfind">
        <button class="circ" aria-label="Back"><svg><use href="#i-circ"/></svg></button>
        <button class="home" aria-label="Home"><svg><use href="#i-home"/></svg></button>
        <label><input type="search" aria-label="Search Project" placeholder="Search Project"><svg class="s30"><use href="#i-mag"/></svg><svg class="c1"><use href="#i-chevthin"/></svg></label>
      </div>
      <div class="scroll">
        <ul class="tree">
          <li class="d3"><svg class="tw"><use href="#i-closed"/></svg><svg class="ic"><use href="#i-gdb"/></svg>GSSICB_AMP_HV_JJA_221128_1808.gdb</li>
          <li class="d3"><svg class="tw"><use href="#i-closed"/></svg><svg class="ic"><use href="#i-gdb"/></svg>GSSICB_AMP_HV_MAM_221128_1815.gdb</li>
          <li class="d3"><svg class="tw"><use href="#i-closed"/></svg><svg class="ic"><use href="#i-gdb"/></svg>GSSICB_AMP_HV_SON_221128_1947.gdb</li>
          <li class="d3"><svg class="tw"><use href="#i-closed"/></svg><svg class="ic"><use href="#i-gdb"/></svg>GSSICB_AMP_VH_DJF_221124_0146.gdb</li>
          <li class="d3"><svg class="tw"><use href="#i-closed"/></svg><svg class="ic"><use href="#i-gdb"/></svg>GSSICB_AMP_VH_JJA_221124_0144.gdb</li>
          <li class="d3"><svg class="tw"><use href="#i-closed"/></svg><svg class="ic"><use href="#i-gdb"/></svg>GSSICB_AMP_VH_MAM_221124_0145.gdb</li>
          <li class="d3"><svg class="tw"><use href="#i-closed"/></svg><svg class="ic"><use href="#i-gdb"/></svg>GSSICB_AMP_VH_SON_221124_0146.gdb</li>
          <li class="d3"><svg class="tw"><use href="#i-closed"/></svg><svg class="ic"><use href="#i-gdb"/></svg>GSSICB_AMP_VV_DJF_221122_0537.gdb</li>
          <li class="d3"><svg class="tw"><use href="#i-closed"/></svg><svg class="ic"><use href="#i-gdb"/></svg>GSSICB_AMP_VV_JJA_221122_0527.gdb</li>
          <li class="d3"><svg class="tw"><use href="#i-closed"/></svg><svg class="ic"><use href="#i-gdb"/></svg>GSSICB_AMP_VV_MAM_221122_0531.gdb</li>
          <li class="d3"><svg class="tw"><use href="#i-closed"/></svg><svg class="ic"><use href="#i-gdb"/></svg>GSSICB_AMP_VV_SON_221122_0533.gdb</li>
          <li class="d3"><svg class="tw"><use href="#i-closed"/></svg><svg class="ic"><use href="#i-gdb"/></svg>GSSICB_COH12_HH_DJF_221111_2328.gdb</li>
          <li class="d3"><svg class="tw"><use href="#i-open3"/></svg><svg class="ic"><use href="#i-gdb"/></svg>GSSICB_COH12_HH_JJA_221116_0522.gdb</li>
          <li class="d4"><span class="tw"></span><svg class="ic wide"><use href="#i-mos"/></svg>COH12_HH_JJA</li>
          <li class="d3"><svg class="tw"><use href="#i-closed"/></svg><svg class="ic"><use href="#i-gdb"/></svg>GSSICB_COH12_HH_MAM_221116_0532.gdb</li>
          <li class="d3"><svg class="tw"><use href="#i-closed"/></svg><svg class="ic"><use href="#i-gdb"/></svg>GSSICB_COH12_HH_SON_221116_0538.gdb</li>
          <li class="d3"><svg class="tw"><use href="#i-closed"/></svg><svg class="ic"><use href="#i-gdb"/></svg>GSSICB_COH12_VV_DJF_221110_0145.gdb</li>
          <li class="d3"><svg class="tw"><use href="#i-closed"/></svg><svg class="ic"><use href="#i-gdb"/></svg>GSSICB_COH12_VV_JJA_221110_0137.gdb</li>
          <li class="d3"><svg class="tw"><use href="#i-closed"/></svg><svg class="ic"><use href="#i-gdb"/></svg>GSSICB_COH12_VV_MAM_221107_2130.gdb</li>
          <li class="d3"><svg class="tw"><use href="#i-closed"/></svg><svg class="ic"><use href="#i-gdb"/></svg>GSSICB_COH12_VV_SON_221110_0141.gdb</li>
          <li class="d3"><svg class="tw"><use href="#i-closed"/></svg><svg class="ic wide"><use href="#i-tbx"/></svg>GSSICB.atbx</li>
          <li class="d3"><span class="tw"></span><svg class="ic wide"><use href="#i-doc"/></svg>COH12_HH_DJF.csv</li>
          <li class="d3"><span class="tw"></span><svg class="ic wide"><use href="#i-doc"/></svg>COH12_VV_DJF.csv</li>
          <li class="d3"><span class="tw"></span><svg class="ic wide"><use href="#i-nb"/></svg>RTCservices.ipynb</li>
          <li class="d2"><svg class="tw"><use href="#i-closed"/></svg><svg class="ic wide"><use href="#i-fold"/></svg>ASF_3_1</li>
          <li class="d2"><svg class="tw"><use href="#i-closed"/></svg><svg class="ic wide"><use href="#i-fold"/></svg>Documents</li>
          <li class="d1"><svg class="tw"><use href="#i-closed"/></svg><svg class="ic wide"><use href="#i-loc"/></svg>Locators</li>
        </ul>
        <div class="sbar"><svg class="up"><use href="#i-chevthin"/></svg><div class="track"><i></i></div><svg><use href="#i-chevthin"/></svg></div>
      </div>
    </div>
    <nav class="btabs">
      <a href="#c" class="on">Catalog</a><a href="#g">Geoprocessing</a><a href="#e">Element</a><a href="#x">Export</a><a href="#s">Symbology</a><a href="#r">Raster Functions</a><a href="#pu">Pop-up</a><a href="#sw">Share As Web Layer</a>
    </nav>
  </section>
</main>

<div class="menu main-menu" role="menu">
  <button role="menuitem"><svg class="s40"><use href="#i-copy"/></svg><span><u>C</u>opy</span></button>
  <button role="menuitem"><svg class="s40"><use href="#i-remove"/></svg><span><u>R</u>emove</span></button>
  <button role="menuitem"><svg class="s40"><use href="#i-group"/></svg><span><u>G</u>roup</span></button>
  <hr>
  <button role="menuitem"><i></i><span><u>O</u>pen Table</span><svg class="arrow"><use href="#i-right"/></svg></button>
  <hr>
  <button role="menuitem"><svg class="s40"><use href="#i-chart"/></svg><span>Create C<u>h</u>art</span><svg class="arrow"><use href="#i-right"/></svg></button>
  <hr>
  <button role="menuitem"><svg class="s40"><use href="#i-zlyr"/></svg><span><u>Z</u>oom To Layer</span></button>
  <button role="menuitem" class="dim"><svg class="s40"><use href="#i-zvis"/></svg><span>Zoom To Make <u>V</u>isible</span></button>
  <button role="menuitem"><svg class="s40"><use href="#i-11"/></svg><span>Zoom To <u>S</u>ource Resolution</span></button>
  <hr>
  <button role="menuitem"><i></i><span>Se<u>l</u>ection</span><svg class="arrow"><use href="#i-right"/></svg></button>
  <hr>
  <button role="menuitem"><svg class="s40"><use href="#i-sym"/></svg><span>S<u>y</u>mbology</span></button>
  <hr>
  <button role="menuitem" class="hot"><i></i><span><u>D</u>ata</span><svg class="arrow"><use href="#i-right"/></svg></button>
  <hr>
  <button role="menuitem"><i></i><span>Sh<u>a</u>ring</span><svg class="arrow"><use href="#i-right"/></svg></button>
  <hr>
  <button role="menuitem"><svg class="s40"><use href="#i-doc"/></svg><span>View <u>M</u>etadata</span></button>
  <button role="menuitem"><svg class="s40"><use href="#i-pen"/></svg><span><u>E</u>dit Metadata</span></button>
  <hr>
  <button role="menuitem"><svg class="s40"><use href="#i-prop"/></svg><span><u>P</u>roperties</span></button>
</div>

<div class="menu sub-menu" role="menu">
  <button role="menuitem"><svg class="s40"><use href="#i-dlras"/></svg><span><u>D</u>ownload Rasters</span></button>
  <button role="menuitem" class="hot"><i></i><span><u>R</u>epair Mosaic Dataset Paths...</span></button>
  <button role="menuitem"><svg class="s40"><use href="#i-anras"/></svg><span><u>A</u>nalyze Mosaic Dataset</span></button>
  <button role="menuitem"><svg class="s40"><use href="#i-expras"/></svg><span><u>E</u>xport Raster</span></button>
</div>
</body>
</html>
```

FILE: styles.css
```css
* { box-sizing: border-box; }

html, body { margin: 0; }

body {
  position: relative;
  display: flex;
  flex-direction: column;
  min-height: 100vh;
  background: #ebebeb;
  color: #4c4c4c;
  font-family: "Open Sans", "Noto Sans", sans-serif;
  font-size: 28px;
  line-height: 40px;
}

svg { display: block; flex: none; overflow: visible; }
.defs { position: absolute; width: 0; height: 0; }
a { color: inherit; text-decoration: none; }
i { display: block; flex: none; }
h2, h3 { margin: 0; font-weight: 400; }

button {
  margin: 0;
  padding: 0;
  border: 0;
  background: none;
  color: inherit;
  font: inherit;
  white-space: nowrap;
}

input, select {
  margin: 0;
  border: 0;
  outline: 0;
  background: none;
  color: inherit;
  font: inherit;
  appearance: none;
}

input::placeholder { color: #555; font-style: italic; opacity: 1; }

.s26 { width: 26px; height: 26px; }
.s28 { width: 28px; height: 28px; }
.s30 { width: 30px; height: 30px; }
.s36 { width: 34px; height: 34px; }
.s40 { width: 40px; height: 40px; }
.s80 { width: 80px; height: 80px; }
.chev { width: 14px; height: 9px; }
.chev2 { width: 20px; height: 13px; }
.over { width: 20px; height: 22px; }
.launch { width: 21px; height: 21px; }

/* ---------- title bar ---------- */

.head {
  background: #f7f9f8;
  border-bottom: 3px solid #c2c3c8;
}

.titlebar {
  display: grid;
  grid-template-columns: 1fr auto 1fr;
  align-items: center;
  height: 79px;
}

.qat {
  display: flex;
  align-items: center;
  gap: 30px;
  padding-left: 19px;
  color: #4c4c4c;
}

.qat .split { display: flex; align-items: center; gap: 21px; margin: 0 -5px 0 -4px; }
.qat .split + button:last-child { margin-left: 20px; }

.center { display: flex; align-items: center; gap: 34px; padding-right: 4px; }
.proj { color: #4c4c4c; font-size: 29px; }

.cmd {
  display: flex;
  align-items: center;
  gap: 13px;
  width: 450px;
  height: 60px;
  padding-left: 15px;
  border: 3px solid #9b9b9b;
  border-radius: 8px;
}

.cmd input { flex: 1; min-width: 0; }
.cmd input::placeholder { color: #828282; }

.account {
  display: flex;
  align-items: center;
  justify-content: flex-end;
  color: #1a1a1a;
}

.avatar {
  width: 60px;
  height: 60px;
  margin-left: 20px;
  border-radius: 50%;
  background: #dfcdf2;
  color: #3d1466;
  font-size: 26px;
  font-weight: 600;
}

.bell { margin-left: 38px; }
.help { width: 40px; margin-left: 55px; color: #6e6e6e; font-size: 36px; }
.win { display: flex; justify-content: center; width: 110px; color: #333; }
.help + .win { margin-left: 36px; }
.win:last-child { width: 108px; }

/* ---------- ribbon tabs ---------- */

.tabs {
  display: flex;
  gap: 83px;
  height: 62px;
  margin-bottom: 8px;
  padding-left: 45px;
  color: #111;
  font-size: 31px;
}

.tabs a { display: flex; align-items: center; padding-top: 4px; }
.tabs .on { margin-left: 4px; font-weight: 600; box-shadow: 0 -8px 0 #0079d0 inset; }
.tabs .imagery { margin-left: 483px; }

.context {
  display: flex;
  gap: 82px;
  margin-left: 8px;
  padding: 0 38px;
  border: 3px solid #dfdfdf;
  border-radius: 8px;
  background: #fff;
}

.context a { padding-top: 2px; }

/* ---------- ribbon ---------- */

.ribbon { display: flex; color: #1a1a1a; }

.grp {
  position: relative;
  display: flex;
  flex-direction: column;
  flex: none;
}

.grp::after {
  content: "";
  position: absolute;
  top: 3px;
  right: 0;
  bottom: 10px;
  width: 3px;
  background: #b4b6b5;
}

.navigate::after { display: none; }
.clipboard { width: 337px; padding-left: 22px; }
.navigate { width: 490px; padding-left: 17px; }
.layer { width: 631px; }
.selection { width: 609px; padding-left: 10px; }
.inquiry { width: 617px; padding-left: 18px; }
.labeling { width: 433px; padding-left: 26px; }
.offline { width: 368px; padding-left: 16px; }

.body { display: flex; height: 180px; }
.layer .body { padding-left: 191px; }

.big {
  display: flex;
  flex-direction: column;
  align-items: center;
  padding-top: 8px;
  border-radius: 8px;
  line-height: 35px;
}

.big span { display: flex; align-items: center; }
.big .s80 { margin-bottom: 10px; }
.big > .chev { margin-top: 14px; }
.big span .chev { margin: 6px 0 0 5px; }
.active { background: #9bdcff; color: #1b4e7a; }
.off { color: #8f9190; }

.w-paste { width: 84px; margin-right: 13px; }
.w-explore { width: 115px; margin-right: 8px; }
.w-add { width: 90px; margin-right: 12px; }
.w-select { width: 106px; }
.w-attr { width: 134px; }
.w-loc { width: 146px; margin-right: 3px; }
.w-measure { width: 129px; }
.w-info { width: 178px; }
.w-coord { width: 166px; }
.w-convert { width: 120px; }
.w-dl { width: 156px; margin-right: 8px; }

.col { display: flex; flex-direction: column; }
.lab { width: 266px; }
.pair { display: flex; gap: 16px; }
.sm { display: flex; align-items: center; gap: 10px; height: 60px; padding-top: 2px; }

.lbl {
  display: grid;
  grid-template-columns: 1fr auto 1fr;
  align-items: center;
  height: 49px;
  padding-top: 8px;
  color: #5a5a5a;
}

.lbl span { grid-column: 2; }
.lbl button { justify-self: end; margin-right: 9px; }
.clipboard .lbl, .inquiry .lbl { margin-left: -22px; }
.navigate .lbl { margin-left: -17px; }
.layer .lbl { padding-left: 25px; }
.labeling .lbl { margin-left: -26px; }
.offline .lbl { margin-left: -16px; }

.collapse { align-self: flex-end; margin: 0 16px 10px auto; transform: rotate(180deg); }
.collapse svg { width: 24px; height: 14px; }

/* ---------- workspace ---------- */

.work {
  display: grid;
  grid-template-columns: 676fr 1298fr 1807fr;
  gap: 14px;
  flex: 1;
  padding: 16px 15px 14px 14px;
}

/* contents */

.contents {
  padding-top: 11px;
  border: 3px solid #0079c1;
  border-radius: 8px;
  background: #f7f9f8;
}

.contents h2 { padding-left: 14px; color: #0079c1; font-size: 38px; line-height: 48px; }
.find { display: flex; align-items: center; gap: 20px; padding: 17px 15px 0 9px; }
.filter { width: 34px; height: 40px; }

.find input {
  flex: 1;
  min-width: 0;
  height: 60px;
  padding: 0 12px;
  border: 2px solid #949494;
  background: #fff;
}

.modes {
  display: flex;
  margin: 15px 15px 0 38px;
  border-bottom: 3px solid #cacaca;
}

.modes button {
  display: flex;
  justify-content: center;
  align-items: flex-start;
  width: 80px;
  height: 91px;
  margin-bottom: -3px;
  padding-top: 10px;
}

.modes svg { width: 54px; height: 54px; }
.modes .on { border-bottom: 8px solid #0079c1; }
.contents h3 { padding: 28px 0 11px 39px; font-size: 33px; font-weight: 600; line-height: 50px; }

.toc { font-size: 29px; }
.row { display: flex; align-items: center; height: 60px; padding-left: 5px; }
.row label { display: flex; align-items: center; gap: 13px; }
.tri { width: 17px; height: 17px; margin: 0 11px 0 0; }
.row > span { margin-left: 13px; }
.l1 { height: 61px; padding: 0 0 1px 33px; }
.l1 .tri { margin-right: 8px; }

.l1 .sel {
  flex: 1;
  height: 60px;
  padding-left: 2px;
  border: 2px solid #0079c1;
  background: #c6dbee;
}

.branch { position: relative; }

.branch::before {
  content: "";
  position: absolute;
  top: -12px;
  bottom: 30px;
  left: 75px;
  width: 3px;
  background: #999;
}

.l2 { position: relative; padding-left: 93px; }

.l2::before {
  content: "";
  position: absolute;
  left: 76px;
  width: 14px;
  height: 2px;
  background: #999;
}

.base { padding-left: 62px; }

input[type="checkbox"] {
  position: relative;
  width: 35px;
  height: 35px;
  border: 3px solid #8f8f8f;
  border-radius: 6px;
  background: #fff;
}

input[type="checkbox"]:checked::before {
  content: "";
  position: absolute;
  top: 2px;
  left: 9px;
  width: 11px;
  height: 20px;
  border: solid #4c4c4c;
  border-width: 0 4px 4px 0;
  transform: rotate(42deg);
}

.sym { height: 61px; padding: 6px 0 0 131px; }
.sym i { width: 50px; height: 40px; border: 3px solid; }
.red { color: #f00; }
.green { color: #0f0; }
.value { padding: 6px 0 10px 130px; font-size: 28px; font-weight: 600; }
.ramp { display: flex; gap: 16px; height: 128px; padding: 0 0 10px 131px; }
.ramp i { width: 50px; background: linear-gradient(#fff, #000); }
.ramp div { display: flex; flex-direction: column; justify-content: space-between; margin: -2px 0 -3px; }

/* map view */

.view { display: flex; flex-direction: column; min-width: 0; }
.vtabs { display: flex; justify-content: flex-end; align-items: center; height: 54px; color: #1a1a1a; }
.vtabs a { display: flex; align-items: center; gap: 13px; height: 54px; padding: 5px 0 0 15px; }
.t1 { width: 210px; }
.vtabs .t2 { width: 335px; padding-left: 13px; font-size: 29px; }
.vtabs .on { border-radius: 8px 8px 0 0; background: #d2d4d8; color: #4c4c4c; }
.close { width: 24px; height: 24px; margin-left: 13px; color: #6e6e6e; }
.vtabs button { width: 46px; padding-left: 13px; color: #6e6e6e; }

.canvas {
  position: relative;
  flex: 1;
  border: solid #d2d4d8;
  border-width: 8px 3px 0;
}

.chart { position: absolute; width: 100%; height: 100%; background: #d1f0fd; overflow: hidden; }
.deep { fill: #c8ecfe; }
.land path { fill: #fafaf6; stroke: #b4dfec; stroke-width: 3; vector-effect: non-scaling-stroke; }
.inlet path { fill: #d1f0fd; stroke: #b4dfec; stroke-width: 3; vector-effect: non-scaling-stroke; }
.bay { fill: #d1f0fd; }
.relief { fill: none; stroke: #f6f5f1; stroke-width: 6; }
.foot { fill: none; stroke: #0f0; stroke-width: 3; }
.names { text-anchor: middle; font-style: italic; letter-spacing: 3px; }
.isle { fill: #222; font: italic 300 28px Roboto, sans-serif; }
.sea { fill: #006284; font-size: 23px; }

.popbtn { position: absolute; right: 16px; bottom: 18px; }
.popbtn svg { width: 53px; height: 46px; }

.status {
  display: flex;
  align-items: center;
  gap: 10px;
  height: 63px;
  padding: 0 13px 0 12px;
  border: solid #d2d4d8;
  border-width: 0 3px 3px;
  background: #f7f9f8;
}

.scale {
  position: relative;
  width: 250px;
  height: 54px;
  border: 2px solid #8f8f8f;
  background: #fff;
  color: #222;
}

.scale select { width: 100%; height: 100%; padding-left: 14px; }

.scale i {
  position: absolute;
  top: 22px;
  right: 10px;
  border: 7px solid transparent;
  border-top-color: #4c4c4c;
  pointer-events: none;
}

.bar { flex: none; width: 2px; height: 38px; background: #b4b6b5; }
.scale + .bar { margin-right: 6px; }
.more { margin: 0 12px 0 8px; color: #222; }
.coords { flex: 1; white-space: nowrap; }
.tail { display: flex; align-items: center; gap: 18px; }
.count { display: flex; align-items: center; gap: 12px; color: #9a9a9a; }

/* catalog */

.catalog { display: flex; flex-direction: column; min-width: 0; }

.pane {
  flex: 1;
  display: flex;
  flex-direction: column;
  padding: 11px 14px 0 13px;
  border: 3px solid #d2d4d8;
  border-bottom-width: 2px;
  border-radius: 8px 8px 0 0;
  background: #f7f9f8;
}

.ptitle { display: flex; align-items: center; gap: 28px; color: #4c4c4c; }
.ptitle h2 { flex: 1; color: #1a1a1a; font-size: 38px; line-height: 48px; }
.ptitle button:last-child { margin: 0 3px 0 -5px; }
.c1 { width: 20px; height: 12px; }
.c2 { width: 20px; height: 26px; }
.ptabs { display: flex; justify-content: space-between; align-items: center; margin-top: 8px; }
.ptabs nav { display: flex; gap: 24px; font-size: 31px; }
.ptabs nav a { height: 64px; line-height: 60px; }
.ptabs .on { font-weight: 600; box-shadow: 0 -6px 0 #0079c1 inset; }
.ham { width: 36px; height: 34px; margin-right: 8px; }
.pfind { display: flex; align-items: center; margin: 23px 0 12px -3px; }
.circ svg { width: 46px; height: 46px; }

.home {
  display: flex;
  justify-content: center;
  align-items: center;
  width: 48px;
  height: 60px;
  margin-left: 12px;
  border: solid #c4c6c5;
  border-width: 2px 0 2px 2px;
}

.home svg { width: 32px; height: 32px; }

.pfind label {
  flex: 1;
  display: flex;
  align-items: center;
  gap: 28px;
  height: 60px;
  padding: 0 16px 0 13px;
  border: 2px solid #949494;
  background: #fff;
  color: #6e6e6e;
}

.pfind input { flex: 1; min-width: 0; }

.scroll { flex: 1; display: flex; justify-content: space-between; }
.tree { margin: 0; padding: 3px 0 0; list-style: none; font-size: 29px; }
.tree li { display: flex; align-items: center; height: 59px; white-space: nowrap; }
.tw { flex: none; width: 18px; height: 22px; margin-right: 19px; }
.ic { width: 40px; height: 32px; margin-right: 20px; }
.wide { width: 42px; height: 38px; margin-right: 18px; }
.d1 { padding-left: 12px; }
.d2 { padding-left: 52px; }
.d3 { padding-left: 92px; }
.d4 { padding-left: 132px; }

.sbar {
  display: flex;
  flex-direction: column;
  align-items: center;
  gap: 14px;
  width: 42px;
  padding: 14px 0;
  background: #ebebeb;
  color: #6e6e6e;
}

.sbar svg { width: 18px; height: 12px; }
.up { transform: rotate(180deg); }
.track { flex: 1; display: flex; flex-direction: column; justify-content: flex-end; }
.track i { width: 22px; height: 58%; border-radius: 10px; background: #b4b4b4; }

.btabs { display: flex; gap: 29px; height: 55px; padding-left: 16px; font-size: 29px; line-height: 50px; }

.btabs .on {
  margin: 0 -14px 0 -16px;
  padding: 0 13px;
  border: solid #d2d4d8;
  border-width: 0 3px 3px;
  border-radius: 0 0 8px 8px;
  background: #f7f9f8;
  color: #0079c1;
}

/* ---------- context menus ---------- */

.menu {
  position: absolute;
  padding: 2px;
  border: 3px solid #d2d2d8;
  background: #fff;
  box-shadow: 6px 10px 16px rgba(0, 0, 0, .28), -4px 4px 14px rgba(0, 0, 0, .14);
  color: #1a1a1a;
}

.main-menu { left: 526px; top: 38px; width: 535px; }
.sub-menu { left: 1051px; top: 814px; width: 563px; }

.menu button {
  display: flex;
  align-items: center;
  gap: 22px;
  width: 100%;
  height: 70px;
  padding: 0 28px 0 17px;
  text-align: left;
}

.menu button > i { width: 40px; }
.menu span { flex: 1; }
.menu u { text-decoration-thickness: 2px; text-underline-offset: 5px; }
.menu hr { height: 3px; margin: 4px 0 5px; border: 0; background: #999; }
.arrow { width: 14px; height: 26px; }
.menu .hot { background: #c1e6fa; color: #1b4e7a; }
.menu .dim { color: #a6a6a6; }
```
